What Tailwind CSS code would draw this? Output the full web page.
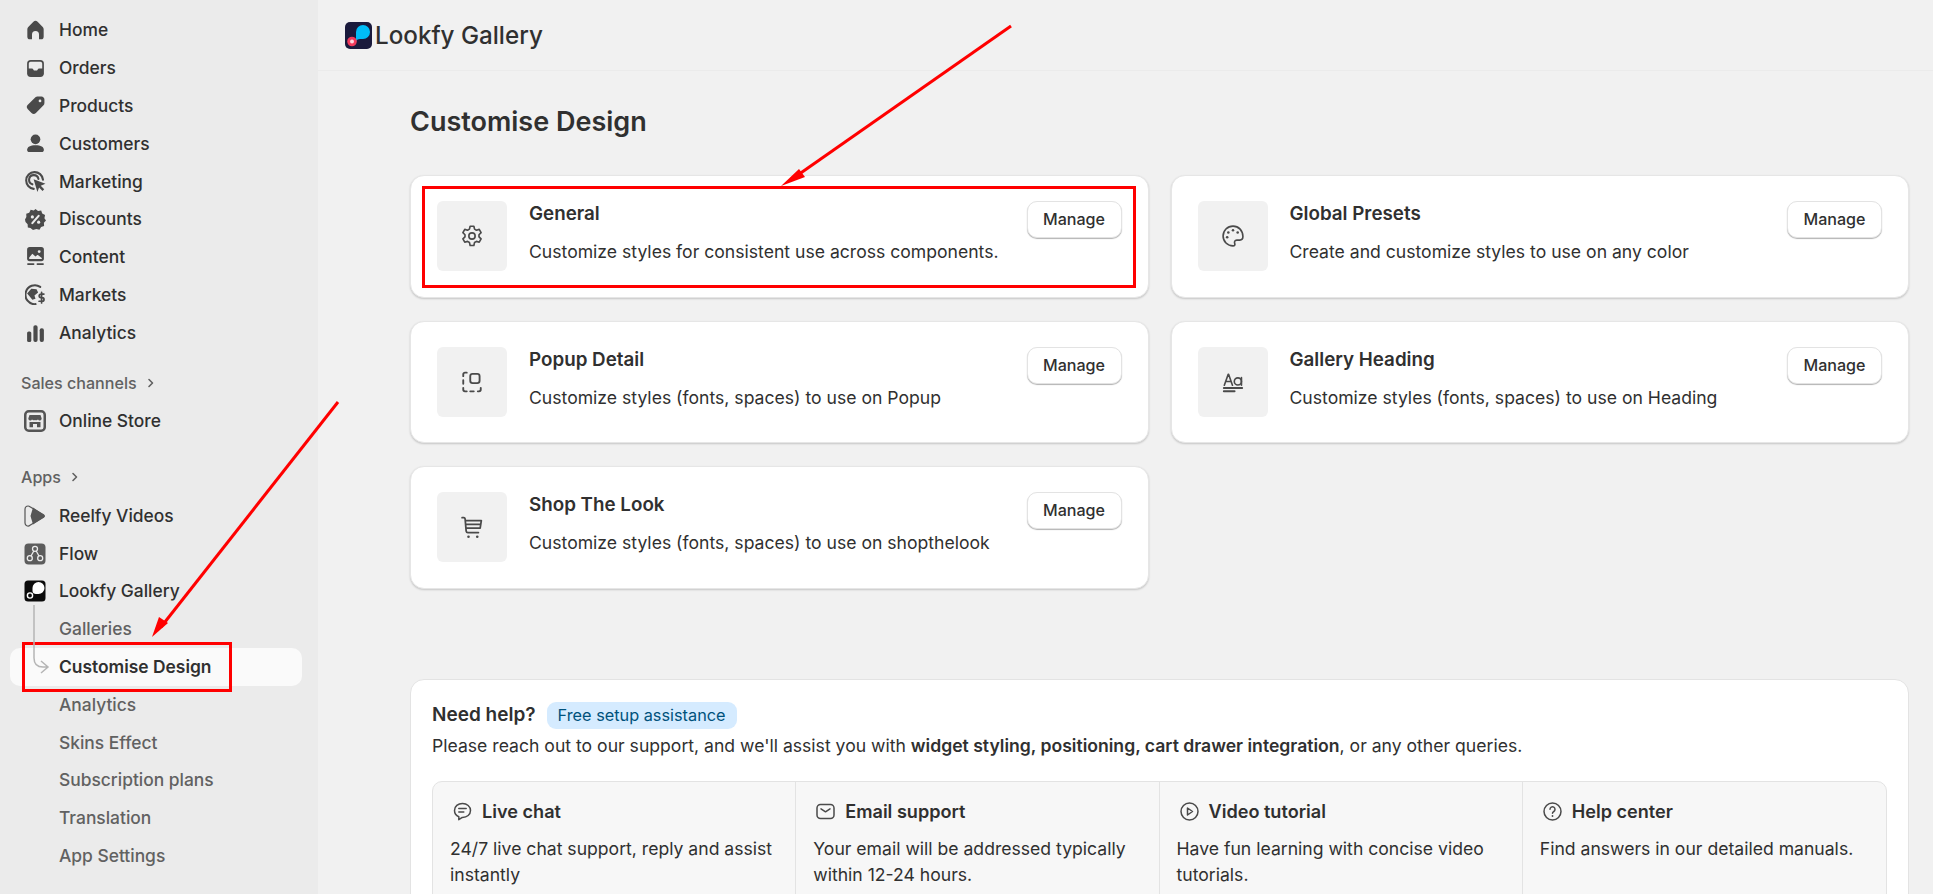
<!doctype html>
<html lang="en"><head><meta charset="utf-8"><title>Customise Design</title>
<script src="https://cdn.jsdelivr.net/npm/@tailwindcss/browser@4"></script></head>
<body class="m-0">
<div class="relative flex h-[894px] w-[1933px] overflow-hidden bg-[#f1f1f1] font-['Inter','Liberation_Sans',sans-serif] text-[#303030]">

<!-- Sidebar -->
<aside class="flex h-full w-[318px] shrink-0 flex-col bg-[#ebebeb] pt-[11.500px] text-[17.400px] font-[500]">
  <a class="flex h-[37.8px] items-center gap-[13px] pl-[25px]"><svg class="size-[21px] shrink-0" viewBox="1 1 18 18" fill="#4a4a4a"><path d="M8.2 2.6a2.5 2.5 0 0 1 3.600 0l4.400 4.500c.5.5.8 1.200.8 1.900v6.300a2.200 2.200 0 0 1-2.200 2.200H13v-4a3 3 0 0 0-6 0v4H5.200A2.200 2.200 0 0 1 3 15.300V9c0-.7.3-1.400.8-1.900z"/></svg><span>Home</span></a>
  <a class="flex h-[37.8px] items-center gap-[13px] pl-[25px]"><svg class="size-[21px] shrink-0" viewBox="0 0 20 20"><rect x="2" y="2" width="16" height="16" rx="3.500" fill="#4a4a4a"/><path d="M3.600 10V5.400c0-1 .8-1.800 1.800-1.800h9.200c1 0 1.800.8 1.800 1.800V10h-3.200a1 1 0 0 0-.8.5l-.7 1.100a1 1 0 0 1-.8.4H9.100a1 1 0 0 1-.8-.4l-.7-1.100a1 1 0 0 0-.8-.5z" fill="#ebebeb"/></svg><span>Orders</span></a>
  <a class="flex h-[37.8px] items-center gap-[13px] pl-[25px]"><svg class="size-[21px] shrink-0" viewBox="0 0 20 20" fill="#4a4a4a"><path fill-rule="evenodd" d="M12.500 1.500h3.200c1.500 0 2.800 1.300 2.800 2.800v3.200c0 1-.4 1.900-1.100 2.600l-7 7a3 3 0 0 1-4.200 0l-3.500-3.500a3 3 0 0 1 0-4.200l7-7c.7-.7 1.600-.9 2.800-.9zM14.300 7a1.300 1.300 0 1 0 0-2.600 1.300 1.300 0 0 0 0 2.600z"/></svg><span>Products</span></a>
  <a class="flex h-[37.8px] items-center gap-[13px] pl-[25px]"><svg class="size-[21px] shrink-0" viewBox="0 0 20 20" fill="#4a4a4a"><circle cx="10" cy="6" r="4.600"/><path d="M2 16.200C2 13 5 11.600 10 11.600s8 1.400 8 4.600c0 1.200-.9 2-2 2H4c-1.100 0-2-.8-2-2z"/></svg><span>Customers</span></a>
  <a class="flex h-[37.8px] items-center gap-[13px] pl-[25px]"><svg class="size-[21px] shrink-0" viewBox="0 0 20 20"><path d="M8.800 17.500A8 8 0 1 1 17.600 8.700" fill="none" stroke="#4a4a4a" stroke-width="2" stroke-linecap="round" transform="translate(-.5 -.5)"/><path d="M7.500 13.200A4.500 4.500 0 1 1 13.300 8" fill="none" stroke="#4a4a4a" stroke-width="2" stroke-linecap="round" transform="translate(-.5 -.5)"/><path d="M8.200 7.800l11.300 4.400-4.500 1.800 3.300 3.400-1.600 1.600-3.300-3.400-1.600 4.400z" fill="#4a4a4a"/></svg><span>Marketing</span></a>
  <a class="flex h-[37.8px] items-center gap-[13px] pl-[25px]"><svg class="size-[21px] shrink-0" viewBox="0 0 20 20"><path d="M10 0l2.400 1.800 3-.3 1 2.900 2.700 1.400-.6 3 1.500 2.200-2 2.200.2 3-2.900.9-1.500 2.600-3-.7L7.600 20l-2.400-1.800-2.500-.7-.2-3L.5 12.300 0 10l1.300-2.500-.1-3 2.800-1 1.400-2.700 3 .6z" fill="#4a4a4a"/><path d="M7 13.500l6-7" stroke="#ebebeb" stroke-width="2" stroke-linecap="round"/><circle cx="7" cy="7.500" r="1.500" fill="#ebebeb"/><circle cx="13" cy="12.500" r="1.500" fill="#ebebeb"/></svg><span>Discounts</span></a>
  <a class="flex h-[37.8px] items-center gap-[13px] pl-[25px]"><svg class="size-[21px] shrink-0" viewBox="0 0 20 20"><rect x="2" y="0" width="16" height="13.500" rx="2.500" fill="#4a4a4a"/><path d="M4 10l3-3.500 3 2.500 2-1.500 4 3v1H4z M13.500 3a1.400 1.400 0 1 0 0 2.800 1.400 1.400 0 0 0 0-2.800z" fill="#ebebeb"/><rect x="2" y="15.500" width="7" height="1.600" rx=".8" fill="#4a4a4a"/><rect x="11" y="15.500" width="7" height="1.600" rx=".8" fill="#4a4a4a"/></svg><span>Content</span></a>
  <a class="flex h-[37.8px] items-center gap-[13px] pl-[25px]"><svg class="size-[21px] shrink-0" viewBox="0 0 20 20"><path d="M14.500 2.800A9 9 0 1 0 10 19.200" fill="none" stroke="#4a4a4a" stroke-width="2" stroke-linecap="round"/><path d="M2 9l4-4.500 5 .5 1.500 3-3.500 3 1 3-3 1-2.500-3z" fill="#4a4a4a"/><path d="M18 9.600h-2.800a1.700 1.700 0 0 0 0 3.400h1.200a1.700 1.700 0 0 1 0 3.400h-3M15.800 8v10" fill="none" stroke="#4a4a4a" stroke-width="1.600" stroke-linecap="round"/></svg><span>Markets</span></a>
  <a class="flex h-[37.8px] items-center gap-[13px] pl-[25px]"><svg class="size-[21px] shrink-0" viewBox="0 0 20 20" fill="#4a4a4a"><rect x="2" y="9" width="4" height="10" rx="1.500"/><rect x="8" y="3" width="4" height="16" rx="1.800"/><rect x="14" y="6" width="4" height="13" rx="1.800"/></svg><span>Analytics</span></a>

  <div class="mt-[12px] flex h-[38px] items-center gap-[8px] pl-[21px] text-[16.100px] font-[500] text-[#616161]"><span>Sales channels</span><svg class="size-[12px]" viewBox="0 0 12 12" fill="none" stroke="#616161" stroke-width="1.600" stroke-linecap="round" stroke-linejoin="round"><path d="M4 2.500L7.500 6 4 9.500"/></svg></div>
  <a class="flex h-[37.8px] items-center gap-[13px] pl-[24px]"><svg class="size-[22px] shrink-0" viewBox="0 0 22 22"><rect x="1.250" y="1.250" width="19.500" height="19.500" rx="3.500" fill="#ebebeb" stroke="#555" stroke-width="2.500"/><path d="M5.500 5h11l1.200 3.500a2 2 0 0 1-3.700 1 2.500 2.500 0 0 1-3 .4 2.500 2.500 0 0 1-3-.4 2 2 0 0 1-3.700-1zM5.500 12h11v5.200h-3.500V14H9v3.200H5.500z" fill="#555"/></svg><span>Online Store</span></a>

  <div class="mt-[18px] flex h-[39.500px] items-center gap-[8px] pl-[21px] text-[16.100px] font-[500] text-[#616161]"><span>Apps</span><svg class="size-[12px]" viewBox="0 0 12 12" fill="none" stroke="#616161" stroke-width="1.600" stroke-linecap="round" stroke-linejoin="round"><path d="M4 2.500L7.500 6 4 9.500"/></svg></div>
  <a class="flex h-[37.8px] items-center gap-[13px] pl-[24px]"><svg class="size-[22px] shrink-0" viewBox="0 0 22 22"><path d="M1 4a3 3 0 0 1 5-2.200l13.500 8a1.500 1.500 0 0 1 0 2.500L6 20.300A3 3 0 0 1 1 18z" fill="none" stroke="#555" stroke-width="1.200"/><path d="M9 2.500l11 7.500a1.400 1.400 0 0 1 0 2.300l-11 7.200L6.500 11z" fill="#555"/></svg><span>Reelfy Videos</span></a>
  <a class="flex h-[37.8px] items-center gap-[13px] pl-[24px]"><svg class="size-[22px] shrink-0" viewBox="0 0 22 22"><rect width="21" height="21" x=".5" y=".5" rx="4" fill="#5c5c5c"/><g fill="none" stroke="#ebebeb" stroke-width="1.300"><circle cx="11" cy="5.800" r="2.500"/><circle cx="5.800" cy="15.200" r="2.500"/><circle cx="16.200" cy="15.200" r="2.500"/><path d="M9.800 8L7 13M12.200 8L15 13"/></g></svg><span>Flow</span></a>
  <a class="flex h-[37.8px] items-center gap-[13px] pl-[24px]"><svg class="size-[22px] shrink-0" viewBox="0 0 22 22"><rect width="21" height="21" x=".5" y=".5" rx="3.500" fill="#0b0b0b"/><path d="M8.500 8a6 6 0 1 1 6 6H12c-2 0-3.500-1-3.500-3z" fill="#fff"/><circle cx="6" cy="15.500" r="2.600" fill="none" stroke="#fff" stroke-width="1.400"/></svg><span>Lookfy Gallery</span></a>

  <a class="flex h-[37.8px] items-center pl-[59px] text-[#616161]">Galleries</a>
  <a class="relative ml-[10px] flex h-[37.8px] w-[292px] items-center rounded-[10px] bg-[#fafafa] pl-[49px] font-[600]"><span>Customise Design</span></a>
  <a class="flex h-[37.8px] items-center pl-[59px] text-[#616161]">Analytics</a>
  <a class="flex h-[37.8px] items-center pl-[59px] text-[#616161]">Skins Effect</a>
  <a class="flex h-[37.8px] items-center pl-[59px] text-[#616161]">Subscription plans</a>
  <a class="flex h-[37.8px] items-center pl-[59px] text-[#616161]">Translation</a>
  <a class="flex h-[37.8px] items-center pl-[59px] text-[#616161]">App Settings</a>
</aside>

<!-- Main -->
<main class="flex h-full min-w-0 flex-1 flex-col">
  <header class="flex h-[71px] shrink-0 items-center gap-[3px] border-b border-[#ebebeb] pl-[27px]">
    <svg class="h-[27px] w-[27px]" viewBox="0 0 27 27"><rect width="27" height="27" rx="5" fill="#1a1a3c"/><path d="M11 10a7 7 0 1 1 7 7h-3c-2 0-4 1-4 3z" fill="#00bdf7"/><circle cx="7" cy="19.500" r="4.800" fill="#f23a5c"/><circle cx="7" cy="19.500" r="2" fill="#ffd5dd"/></svg>
    <span class="pt-[2px] text-[24.200px] font-[500]">Lookfy Gallery</span>
  </header>
  <div class="flex flex-col pl-[92px] pr-[24px]">
    <h1 class="mt-[33px] h-[35px] text-[27px] leading-[35px] font-[600]">Customise Design</h1>
    <div class="mt-[36px] grid grid-cols-2 gap-x-[22px] gap-y-[23px]">
      <div class="flex h-[122.500px] items-start rounded-[14px] border border-[#e6e6e6] bg-white px-[26px] pt-[25px] shadow-[0_1px_2px_rgba(0,0,0,0.18)]">
        <div class="flex h-[70px] w-[70px] shrink-0 items-center justify-center rounded-[6px] bg-[#f1f1f1]"><svg class="size-[28px]" viewBox="0 0 24 24" fill="none" stroke="#4a4a4a" stroke-width="1.400" stroke-linejoin="round"><circle cx="12" cy="12" r="2.700"/><path d="M10.400 3.600h3.200l.6 2.500 1.600.9 2.400-.7 1.600 2.800-1.800 1.800v1.800l1.800 1.800-1.600 2.800-2.400-.7-1.600.9-.6 2.600h-3.200l-.6-2.600-1.600-.9-2.400.7-1.600-2.800 1.800-1.800v-1.800L4.200 9.100l1.600-2.800 2.400.7 1.600-.9z"/></svg></div>
        <div class="ml-[22px] min-w-0 flex-1"><div class="mt-[1px] text-[18.800px] leading-[24px] font-[600]">General</div><div class="mt-[14px] text-[17.600px] leading-[24px]">Customize styles for consistent use across components.</div></div>
        <button class="flex h-[37px] w-[95px] shrink-0 items-center justify-center rounded-[10px] border border-[#e3e3e3] bg-white text-[16.100px] font-[500] shadow-[0_1px_1px_rgba(0,0,0,0.3)]">Manage</button>
      </div>
      <div class="flex h-[122.500px] items-start rounded-[14px] border border-[#e6e6e6] bg-white px-[26px] pt-[25px] shadow-[0_1px_2px_rgba(0,0,0,0.18)]">
        <div class="flex h-[70px] w-[70px] shrink-0 items-center justify-center rounded-[6px] bg-[#f1f1f1]"><svg class="size-[28px]" viewBox="0 0 24 24" fill="none" stroke="#4a4a4a" stroke-width="1.400" stroke-linejoin="round"><path d="M12 3.500c-4.800 0-8.500 3.800-8.500 8.500s3.800 8.500 8.500 8.500c1.400 0 1.900-1 1.500-2-.5-1.300-.2-3 1.800-3h2.500c1.500 0 2.700-1.200 2.700-3 0-5-3.600-9-8.500-9z"/><g fill="#4a4a4a" stroke="none"><circle cx="8" cy="9" r="1.100"/><circle cx="12" cy="7" r="1.100"/><circle cx="16" cy="9" r="1.100"/><circle cx="7" cy="13" r="1.100"/></g></svg></div>
        <div class="ml-[22px] min-w-0 flex-1"><div class="mt-[1px] text-[18.800px] leading-[24px] font-[600]">Global Presets</div><div class="mt-[14px] text-[17.600px] leading-[24px]">Create and customize styles to use on any color</div></div>
        <button class="flex h-[37px] w-[95px] shrink-0 items-center justify-center rounded-[10px] border border-[#e3e3e3] bg-white text-[16.100px] font-[500] shadow-[0_1px_1px_rgba(0,0,0,0.3)]">Manage</button>
      </div>
      <div class="flex h-[122.500px] items-start rounded-[14px] border border-[#e6e6e6] bg-white px-[26px] pt-[25px] shadow-[0_1px_2px_rgba(0,0,0,0.18)]">
        <div class="flex h-[70px] w-[70px] shrink-0 items-center justify-center rounded-[6px] bg-[#f1f1f1]"><svg class="size-[28px]" viewBox="0 0 24 24" fill="none" stroke="#4a4a4a" stroke-width="1.600" stroke-linecap="round"><rect x="10.500" y="5" width="8" height="8" rx="2"/><path d="M7.500 4H6a1.500 1.500 0 0 0-1.500 1.500V7M4.500 10.500v3M4.500 17v1.500A1.500 1.500 0 0 0 6 20h1.500M10.500 20h3M17 20h1A1.500 1.500 0 0 0 19.500 18.500V17"/></svg></div>
        <div class="ml-[22px] min-w-0 flex-1"><div class="mt-[1px] text-[18.800px] leading-[24px] font-[600]">Popup Detail</div><div class="mt-[14px] text-[17.600px] leading-[24px]">Customize styles (fonts, spaces) to use on Popup</div></div>
        <button class="flex h-[37px] w-[95px] shrink-0 items-center justify-center rounded-[10px] border border-[#e3e3e3] bg-white text-[16.100px] font-[500] shadow-[0_1px_1px_rgba(0,0,0,0.3)]">Manage</button>
      </div>
      <div class="flex h-[122.500px] items-start rounded-[14px] border border-[#e6e6e6] bg-white px-[26px] pt-[25px] shadow-[0_1px_2px_rgba(0,0,0,0.18)]">
        <div class="flex h-[70px] w-[70px] shrink-0 items-center justify-center rounded-[6px] bg-[#f1f1f1]"><svg class="size-[26px]" viewBox="0 0 24 24" fill="none" stroke="#4a4a4a" stroke-width="1.500" stroke-linecap="round" stroke-linejoin="round"><path d="M4 15l3.500-10h.5L11.500 15M5.300 11.500h5"/><circle cx="16.500" cy="11.500" r="3.300"/><path d="M19.800 8v7"/><path d="M3.500 17.500h17M3.500 20.500h10" stroke-width="1.700"/></svg></div>
        <div class="ml-[22px] min-w-0 flex-1"><div class="mt-[1px] text-[18.800px] leading-[24px] font-[600]">Gallery Heading</div><div class="mt-[14px] text-[17.600px] leading-[24px]">Customize styles (fonts, spaces) to use on Heading</div></div>
        <button class="flex h-[37px] w-[95px] shrink-0 items-center justify-center rounded-[10px] border border-[#e3e3e3] bg-white text-[16.100px] font-[500] shadow-[0_1px_1px_rgba(0,0,0,0.3)]">Manage</button>
      </div>
      <div class="flex h-[122.500px] items-start rounded-[14px] border border-[#e6e6e6] bg-white px-[26px] pt-[25px] shadow-[0_1px_2px_rgba(0,0,0,0.18)]">
        <div class="flex h-[70px] w-[70px] shrink-0 items-center justify-center rounded-[6px] bg-[#f1f1f1]"><svg class="size-[28px]" viewBox="0 0 24 24" fill="none" stroke="#4a4a4a" stroke-width="1.500" stroke-linecap="round" stroke-linejoin="round"><path d="M3.500 4H5c.6 0 1 .4 1.100 1L7 15.500a1.500 1.500 0 0 0 1.500 1.300h9M6.200 6.500H20l-1 6.500H7M7 9.800h12"/><circle cx="9" cy="20.300" r="1.100" fill="#4a4a4a" stroke="none"/><circle cx="16.500" cy="20.300" r="1.100" fill="#4a4a4a" stroke="none"/></svg></div>
        <div class="ml-[22px] min-w-0 flex-1"><div class="mt-[1px] text-[18.800px] leading-[24px] font-[600]">Shop The Look</div><div class="mt-[14px] text-[17.600px] leading-[24px]">Customize styles (fonts, spaces) to use on shopthelook</div></div>
        <button class="flex h-[37px] w-[95px] shrink-0 items-center justify-center rounded-[10px] border border-[#e3e3e3] bg-white text-[16.100px] font-[500] shadow-[0_1px_1px_rgba(0,0,0,0.3)]">Manage</button>
      </div>
    </div>

    <section class="mt-[90.500px] h-[400px] rounded-[14px] border border-[#e3e3e3] bg-white px-[21px] pt-[21px]">
      <div class="flex items-center gap-[11px]"><span class="text-[19px] font-[600]">Need help?</span><span class="flex h-[27px] items-center rounded-[9px] bg-[#d5ebff] px-[11px] text-[16.300px] font-[400] text-[#00527c]">Free setup assistance</span></div>
      <p class="mt-[3px] text-[17.600px] leading-[26px]">Please reach out to our support, and we'll assist you with <b class="font-[600]">widget styling, positioning, cart drawer integration</b>, or any other queries.</p>
      <div class="mt-[22px] grid h-[300px] grid-cols-4 rounded-[10px] border border-[#e3e3e3] bg-[#f7f7f7]">
        <div class="border-r border-[#e3e3e3] px-[17px] pt-[18px]"><div class="flex h-[24px] items-center gap-[9px] pl-[2px]"><svg class="size-[21px]" viewBox="0 0 21 21" fill="none" stroke="#4a4a4a" stroke-width="1.500" stroke-linecap="round" stroke-linejoin="round"><path d="M10.500 2.500c-4.500 0-8 2.800-8 7 0 3 1.800 5.200 4.300 6.200v3l3.500-2.300h.2c4.500 0 8-2.800 8-6.900s-3.500-7-8-7z"/><path d="M6.800 7.500h7.400M6.800 11h5"/></svg><span class="text-[18.100px] font-[600]">Live chat</span></div><p class="mt-[12px] text-[17.600px] leading-[26px]">24/7 live chat support, reply and assist instantly</p></div>
        <div class="border-r border-[#e3e3e3] px-[17px] pt-[18px]"><div class="flex h-[24px] items-center gap-[9px] pl-[2px]"><svg class="size-[21px]" viewBox="0 0 21 21" fill="none" stroke="#4a4a4a" stroke-width="1.500" stroke-linecap="round" stroke-linejoin="round"><rect x="2" y="3.500" width="17" height="14" rx="3.500"/><path d="M6 7.800l4.500 3 4.500-3"/></svg><span class="text-[18.100px] font-[600]">Email support</span></div><p class="mt-[12px] text-[17.600px] leading-[26px]">Your email will be addressed typically within 12-24 hours.</p></div>
        <div class="border-r border-[#e3e3e3] px-[17px] pt-[18px]"><div class="flex h-[24px] items-center gap-[9px] pl-[2px]"><svg class="size-[21px]" viewBox="0 0 21 21" fill="none" stroke="#4a4a4a" stroke-width="1.500" stroke-linejoin="round"><circle cx="10.500" cy="10.500" r="8.500"/><path d="M8.500 7l5 3.500-5 3.500z"/></svg><span class="text-[18.100px] font-[600]">Video tutorial</span></div><p class="mt-[12px] text-[17.600px] leading-[26px]">Have fun learning with concise video tutorials.</p></div>
        <div class="px-[17px] pt-[18px]"><div class="flex h-[24px] items-center gap-[9px] pl-[2px]"><svg class="size-[21px]" viewBox="0 0 21 21" fill="none" stroke="#4a4a4a" stroke-width="1.500" stroke-linecap="round"><circle cx="10.500" cy="10.500" r="8.500"/><path d="M8 8.300a2.500 2.500 0 1 1 3.800 2.200c-.8.500-1.300 1-1.300 1.800"/><circle cx="10.500" cy="15" r=".9" fill="#4a4a4a" stroke="none"/></svg><span class="text-[18.100px] font-[600]">Help center</span></div><p class="mt-[12px] text-[17.600px] leading-[26px]">Find answers in our detailed manuals.</p></div>
      </div>
    </section>
  </div>
</main>

<!-- Annotation overlay: red boxes and arrows drawn over the screenshot -->
<div class="absolute left-[422px] top-[186px] h-[102px] w-[714px] border-[3px] border-[#ff0000]"></div>
<div class="absolute left-[22px] top-[642px] h-[50px] w-[210px] border-[3px] border-[#ff0000]"></div>
<svg class="pointer-events-none absolute left-0 top-0" width="1933" height="894" viewBox="0 0 1933 894" fill="none">
  <path d="M34 605V658q0 9 9 9H47M41 661l7 6-7 6" stroke="#b5b5b5" stroke-width="1.500"/>
  <path d="M1011 26L795 177" stroke="#ff0000" stroke-width="3"/><path d="M781 186l18-17 6 8z" fill="#ff0000"/>
  <path d="M338 402L161 627" stroke="#ff0000" stroke-width="3"/><path d="M152 637l7-20 9 6z" fill="#ff0000"/>
</svg>
</div>
</body></html>
